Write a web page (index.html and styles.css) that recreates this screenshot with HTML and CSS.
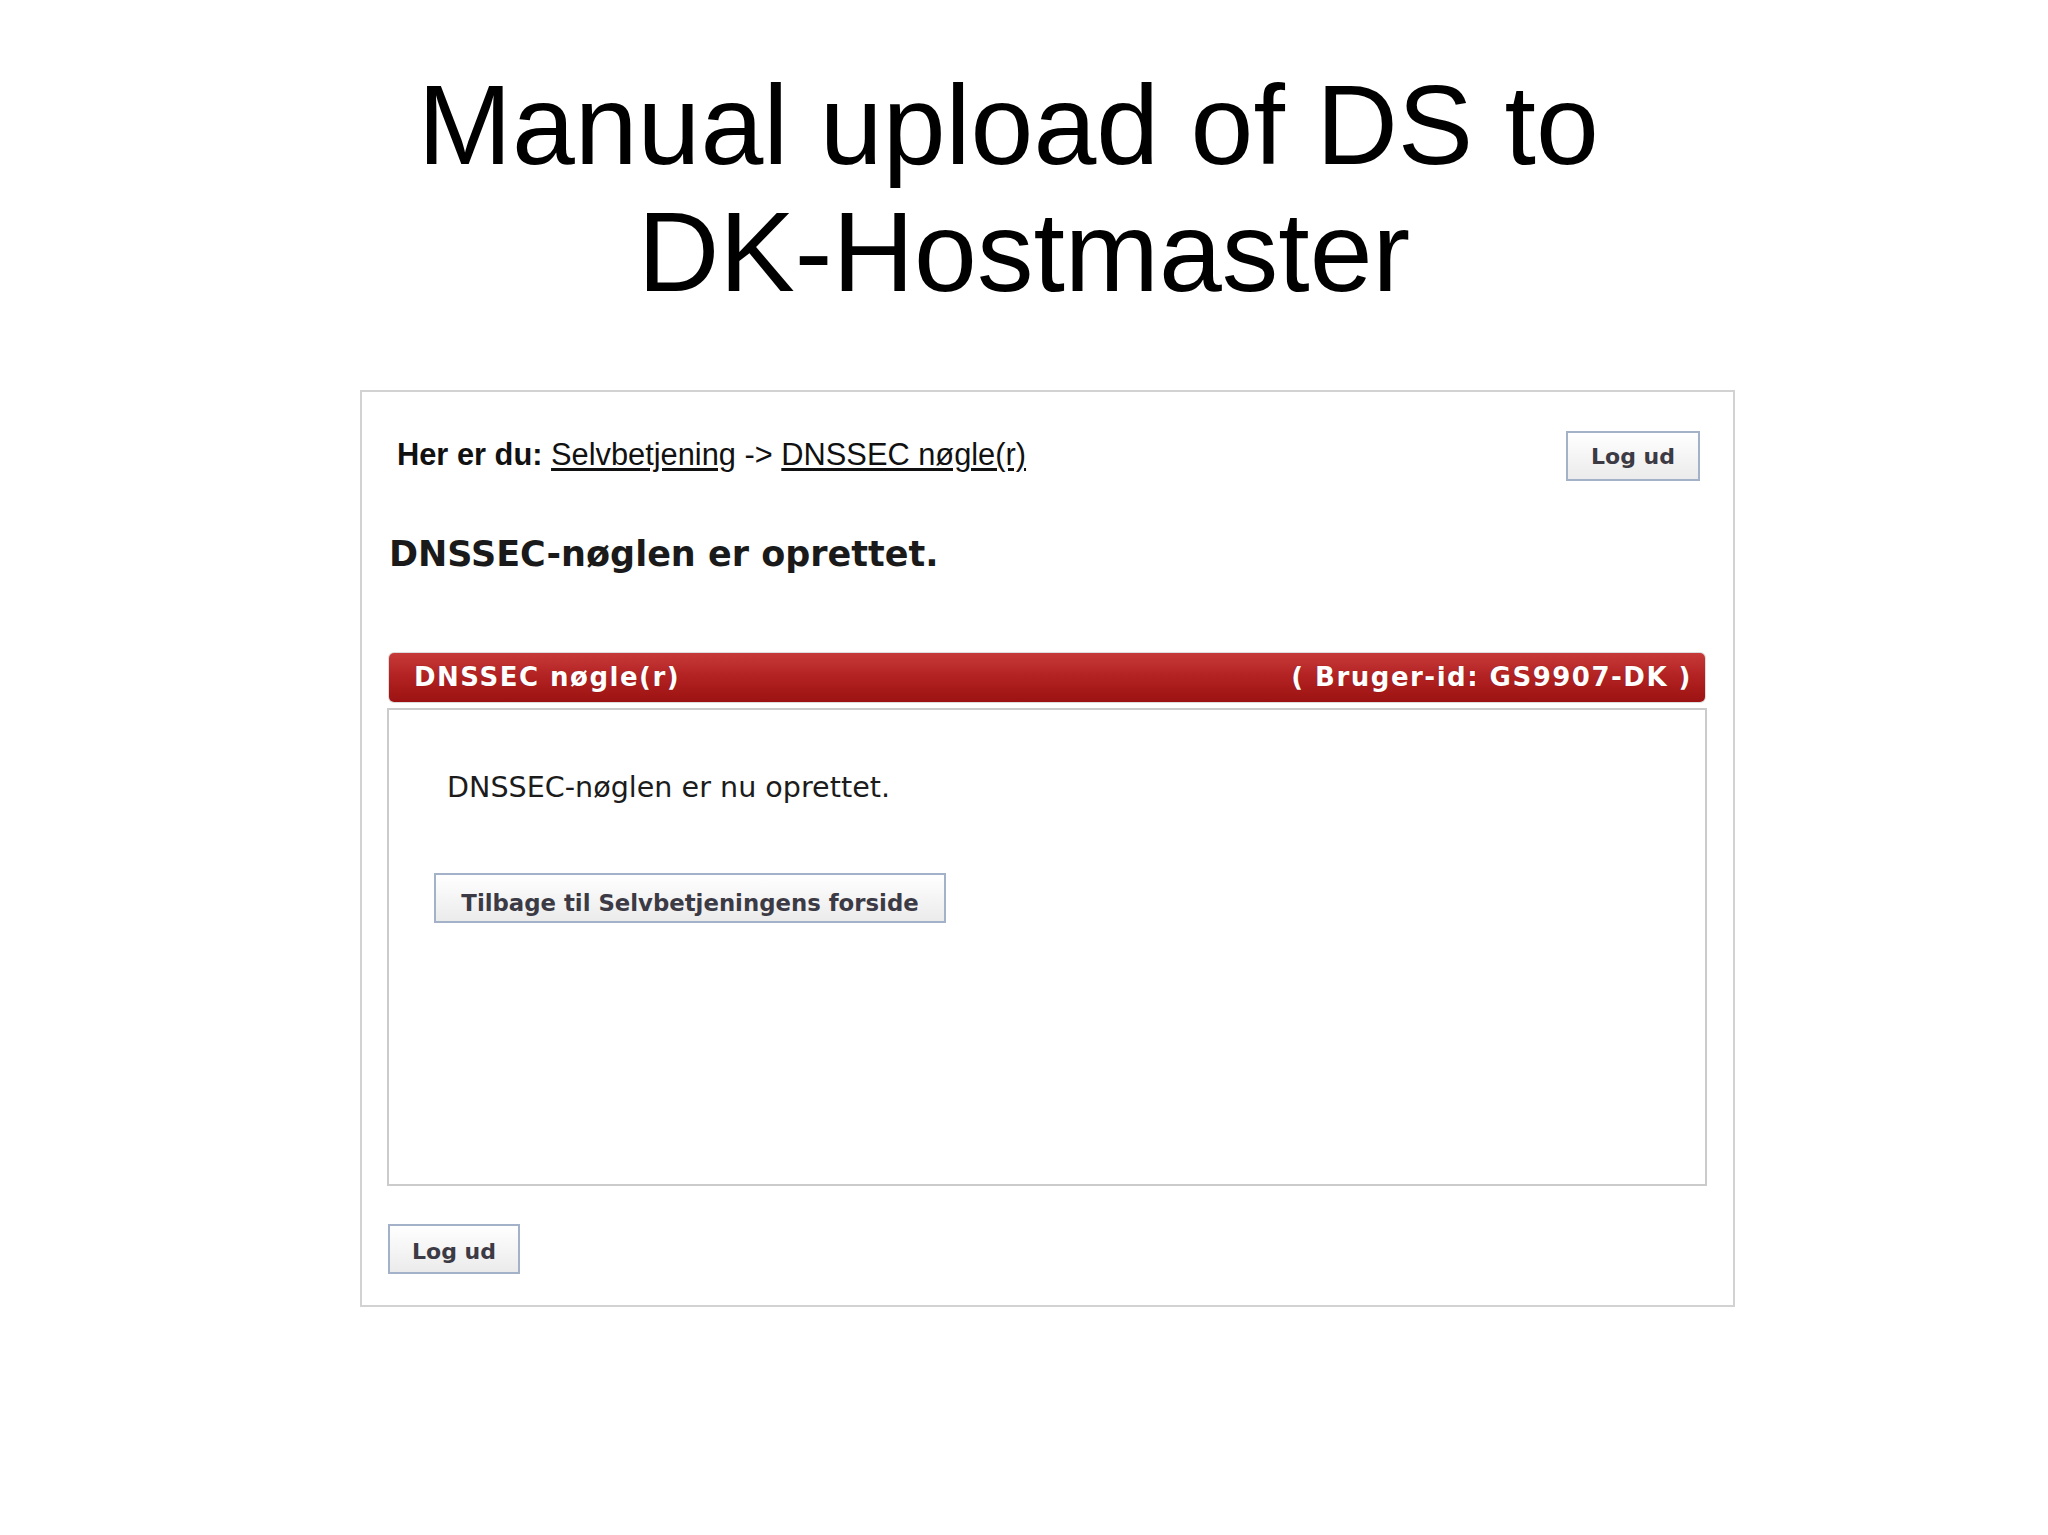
FILE: index.html
```html
<!DOCTYPE html>
<html lang="en">
<head>
<meta charset="utf-8">
<title>Manual upload of DS to DK-Hostmaster</title>
<link rel="stylesheet" href="styles.css">
</head>
<body>
<h1 class="title">Manual upload of DS to&nbsp;<br>DK-Hostmaster</h1>
<div class="shot">
  <div class="toprow">
    <div class="crumb"><b>Her er du:</b> <a href="#">Selvbetjening</a> -&gt; <a href="#">DNSSEC nøgle(r)</a></div>
    <button class="btn btn-top">Log ud</button>
  </div>
  <h2 class="heading">DNSSEC-nøglen er oprettet.</h2>
  <div class="bar">
    <span>DNSSEC nøgle(r)</span>
    <span>( Bruger-id: GS9907-DK )</span>
  </div>
  <div class="panel">
    <p class="msg">DNSSEC-nøglen er nu oprettet.</p>
    <button class="btn btn-back">Tilbage til Selvbetjeningens forside</button>
  </div>
  <button class="btn btn-bottom">Log ud</button>
</div>
</body>
</html>
```
FILE: styles.css
```css
html, body {
  margin: 0;
  padding: 0;
  background: #ffffff;
}

.title {
  margin: 62px 0 0 0;
  font-family: "Liberation Sans", Arial, sans-serif;
  font-weight: normal;
  font-size: 113px;
  line-height: 127px;
  color: #000;
  text-align: center;
}

.shot {
  box-sizing: border-box;
  width: 1375px;
  margin: 74px 0 0 360px;
  border: 2px solid #d2d2d2;
  padding: 39px 28px 31px 27px;
  background: #fff;
}

.toprow {
  display: flex;
  justify-content: space-between;
  align-items: center;
  height: 50px;
}

.crumb {
  margin-left: 8px;
  margin-bottom: 2px;
  font-family: "Liberation Sans", Arial, sans-serif;
  font-size: 30.8px;
  color: #111;
  white-space: nowrap;
}

.crumb b {
  font-weight: bold;
}

.crumb a {
  color: #111;
  text-decoration: underline;
  text-underline-offset: 3px;
}

.btn {
  box-sizing: border-box;
  height: 50px;
  border: 2px solid #a3b2c8;
  border-radius: 0;
  background: linear-gradient(#ffffff, #ebebeb);
  font-family: "DejaVu Sans", Verdana, sans-serif;
  font-weight: bold;
  color: #3c3a44;
  padding: 0;
  cursor: pointer;
}

.btn-top {
  width: 134px;
  margin-right: 5px;
  font-size: 22px;
  line-height: 48px;
}

.heading {
  margin: 53px 0 0 0;
  font-family: "DejaVu Sans", Verdana, sans-serif;
  font-weight: bold;
  font-size: 35px;
  line-height: 41px;
  color: #1a1a1a;
}

.bar {
  display: flex;
  justify-content: space-between;
  align-items: center;
  height: 49px;
  margin-top: 78px;
  padding: 0 13px 0 25px;
  border-radius: 5px;
  background: linear-gradient(#c73a3a 0%, #b42323 45%, #9c1212 100%);
  box-shadow: 0 0 0 1px #dcdcdc;
  font-family: "DejaVu Sans", Verdana, sans-serif;
  font-weight: bold;
  font-size: 26px;
  letter-spacing: 1.5px;
  line-height: 49px;
  color: #fff;
  text-shadow: 0 0 1px rgba(80, 0, 0, 0.5);
}

.panel {
  box-sizing: border-box;
  height: 478px;
  margin: 6px -2px 0 -2px;
  border: 2px solid #cbcbcb;
  padding: 60px 45px 0 45px;
}

.msg {
  margin: 0 0 69px 13px;
  font-family: "DejaVu Sans", Verdana, sans-serif;
  font-size: 28.6px;
  line-height: 34px;
  color: #1c1c1c;
}

.btn-back {
  width: 512px;
  font-size: 22.8px;
  padding-top: 10px;
  line-height: 36px;
}

.btn-bottom {
  display: block;
  width: 132px;
  margin: 38px 0 0 -1px;
  font-size: 22px;
  padding-top: 6px;
  line-height: 40px;
}
```
